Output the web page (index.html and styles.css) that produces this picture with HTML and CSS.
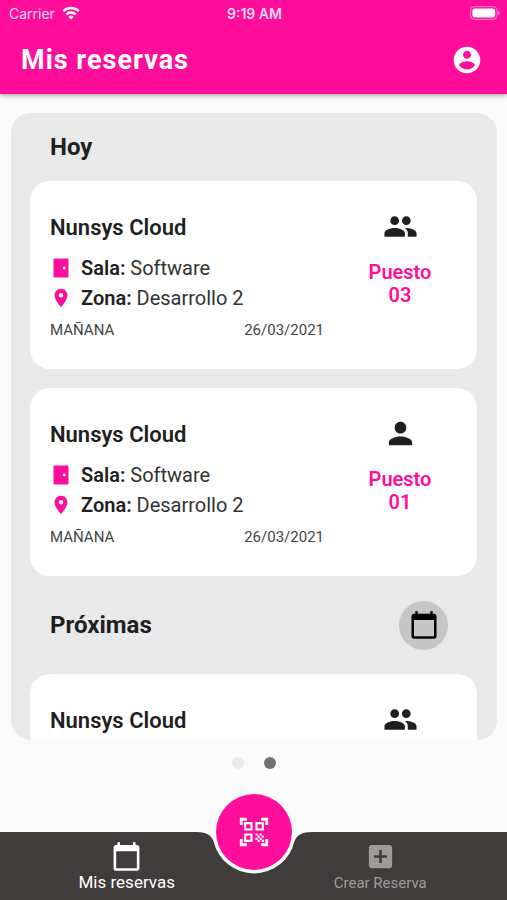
FILE: index.html
```html
<!DOCTYPE html>
<html lang="es">
<head>
<meta charset="utf-8">
<meta name="viewport" content="width=device-width, initial-scale=1">
<title>Mis reservas</title>
<link rel="stylesheet" href="styles.css">
</head>
<body>
<svg class="symbols" aria-hidden="true">
  <symbol id="people" viewBox="0 0 24 24"><path d="M16 11c1.66 0 2.99-1.34 2.99-3S17.66 5 16 5s-3 1.34-3 3 1.34 3 3 3zm-8 0c1.66 0 2.99-1.34 2.99-3S9.66 5 8 5 5 6.34 5 8s1.34 3 3 3zm0 2c-2.33 0-7 1.17-7 3.500V19h14v-2.500C15 14.170 10.330 13 8 13zm8 0c-.29 0-.62.02-.97.05 1.160.84 1.970 1.970 1.970 3.450V19h6v-2.500c0-2.330-4.670-3.500-7-3.500z"/></symbol>
  <symbol id="person" viewBox="0 0 24 24"><path d="M12 12c2.210 0 4-1.790 4-4s-1.790-4-4-4-4 1.790-4 4 1.790 4 4 4zm0 2c-2.670 0-8 1.340-8 4v2h16v-2c0-2.660-5.330-4-8-4z"/></symbol>
  <symbol id="door" viewBox="0 0 22 22"><path fill-rule="evenodd" d="M4.500 1.500h13a1 1 0 0 1 1 1v17a1 1 0 0 1-1 1h-13a1 1 0 0 1-1-1v-17a1 1 0 0 1 1-1zM14.200 9.600a1.400 1.400 0 1 0 0 2.800 1.400 1.400 0 0 0 0-2.800z"/></symbol>
  <symbol id="place" viewBox="0 0 24 24"><path d="M12 2C8.130 2 5 5.130 5 9c0 5.250 7 13 7 13s7-7.750 7-13c0-3.870-3.130-7-7-7zm0 9.500a2.500 2.500 0 0 1 0-5 2.500 2.500 0 0 1 0 5z"/></symbol>
  <symbol id="calendar" viewBox="0 0 24 24"><path d="M20 3h-1V1h-2v2H7V1H5v2H4c-1.100 0-2 .9-2 2v16c0 1.100.9 2 2 2h16c1.100 0 2-.9 2-2V5c0-1.100-.9-2-2-2zm0 18H4V8h16v13z"/></symbol>
</svg>

<header class="header">
  <div class="status">
    <div class="status-left">
      <span>Carrier</span>
      <svg class="wifi" viewBox="0 0 18 14" aria-hidden="true">
        <path d="M9 13.600 6.400 10.900a3.700 3.700 0 0 1 5.200 0z" fill="currentColor"/>
        <path d="M4.300 8.500a6.700 6.700 0 0 1 9.400 0M1.200 5.200a11.200 11.200 0 0 1 15.600 0" fill="none" stroke="currentColor" stroke-width="2.400"/>
      </svg>
    </div>
    <span class="status-time">9:19 AM</span>
    <div class="status-right">
      <svg class="battery" viewBox="0 0 30 14" aria-hidden="true">
        <rect x="0.600" y="0.600" width="26.400" height="12.800" rx="4" fill="none" stroke="#fff" stroke-opacity=".4" stroke-width="1.200"/>
        <rect x="2.400" y="2.400" width="22.800" height="9.200" rx="2.400" fill="#fff"/>
        <path d="M28 4.800q1.800.6 1.800 2.200t-1.800 2.200z" fill="#fff" fill-opacity=".45"/>
      </svg>
    </div>
  </div>
  <div class="app-bar">
    <h1 class="app-title">Mis reservas</h1>
    <button class="icon-button" type="button" aria-label="Perfil">
      <svg class="profile-icon" viewBox="0 0 24 24"><path d="M12 2C6.480 2 2 6.480 2 12s4.480 10 10 10 10-4.480 10-10S17.520 2 12 2zm0 3c1.660 0 3 1.340 3 3s-1.340 3-3 3-3-1.340-3-3 1.340-3 3-3zm0 14.200c-2.500 0-4.710-1.280-6-3.220.03-1.990 4-3.080 6-3.080 1.990 0 5.970 1.090 6 3.080-1.290 1.940-3.500 3.220-6 3.220z"/></svg>
    </button>
  </div>
</header>

<main class="content">
  <div class="panel">
    <div class="section-head">
      <h2 class="section-title">Hoy</h2>
    </div>
    <div class="cards">
      <article class="card">
        <div class="card-info">
          <h3 class="card-title">Nunsys Cloud</h3>
          <p class="detail"><svg class="detail-icon"><use href="#door"/></svg><span><b>Sala:</b> Software</span></p>
          <p class="detail"><svg class="detail-icon"><use href="#place"/></svg><span><b>Zona:</b> Desarrollo 2</span></p>
          <div class="schedule"><span>MAÑANA</span><time datetime="2021-03-26">26/03/2021</time></div>
        </div>
        <div class="seat">
          <svg class="seat-icon"><use href="#people"/></svg>
          <p class="seat-label">Puesto<br>03</p>
        </div>
      </article>
      <article class="card">
        <div class="card-info">
          <h3 class="card-title">Nunsys Cloud</h3>
          <p class="detail"><svg class="detail-icon"><use href="#door"/></svg><span><b>Sala:</b> Software</span></p>
          <p class="detail"><svg class="detail-icon"><use href="#place"/></svg><span><b>Zona:</b> Desarrollo 2</span></p>
          <div class="schedule"><span>MAÑANA</span><time datetime="2021-03-26">26/03/2021</time></div>
        </div>
        <div class="seat">
          <svg class="seat-icon"><use href="#person"/></svg>
          <p class="seat-label">Puesto<br>01</p>
        </div>
      </article>
    </div>
    <div class="section-head section-head-tall">
      <h2 class="section-title">Próximas</h2>
      <button class="calendar-button" type="button" aria-label="Calendario"><svg class="calendar-icon"><use href="#calendar"/></svg></button>
    </div>
    <div class="cards">
      <article class="card">
        <div class="card-info">
          <h3 class="card-title">Nunsys Cloud</h3>
        </div>
        <div class="seat">
          <svg class="seat-icon"><use href="#people"/></svg>
        </div>
      </article>
    </div>
  </div>
  <div class="dots">
    <span class="dot"></span>
    <span class="dot dot-active"></span>
  </div>
</main>

<nav class="nav">
  <a class="nav-item nav-item-active" href="#reservas">
    <svg class="nav-icon"><use href="#calendar"/></svg>
    <span>Mis reservas</span>
  </a>
  <a class="nav-item" href="#crear">
    <svg class="nav-icon" viewBox="0 0 24 24"><path d="M19 3H5c-1.110 0-2 .9-2 2v14c0 1.100.89 2 2 2h14c1.100 0 2-.9 2-2V5c0-1.100-.9-2-2-2zm-2 10h-4v4h-2v-4H7v-2h4V7h2v4h4v2z"/></svg>
    <span>Crear Reserva</span>
  </a>
  <svg class="notch" viewBox="0 0 120 44" aria-hidden="true"><path d="M0 0H120V1H118C108 1 103 4 100.500 10A41.500 41.500 0 0 1 19.500 10C17 4 12 1 2 1H0Z"/></svg>
  <button class="scan-button" type="button" aria-label="Escanear código QR">
    <svg class="scan-icon" viewBox="0 0 24 24"><path d="M9.500 6.500v3h-3v-3h3M11 5H5v6h6V5zM9.500 14.500v3h-3v-3h3M11 13H5v6h6v-6zM17.500 6.500v3h-3v-3h3M19 5h-6v6h6V5zM13 13h1.500v1.500H13zM14.500 14.500H16V16h-1.500zM16 13h1.500v1.500H16zM13 16h1.500v1.500H13zM14.500 17.500H16V19h-1.500zM16 16h1.500v1.500H16zM17.500 14.500H19V16h-1.500zM17.500 17.500H19V19h-1.500zM22 7h-2V4h-3V2h5v5zM22 22v-5h-2v3h-3v2h5zM2 22h5v-2H4v-3H2v5zM2 2v5h2V4h3V2H2z"/></svg>
  </button>
</nav>
</body>
</html>
```
FILE: styles.css
```css
:root {
  --pink: #ff0d9b;
  --page: #fafafa;
  --panel: #e9e9e9;
  --ink: #1f1f1f;
  --nav: #403c3b;
}

* {
  box-sizing: border-box;
}

body {
  margin: 0;
  height: 100vh;
  display: flex;
  flex-direction: column;
  background: var(--page);
  color: var(--ink);
  font-family: Roboto, sans-serif;
}

h1, h2, h3, p {
  margin: 0;
}

button {
  padding: 0;
  border: 0;
  background: none;
  color: inherit;
  cursor: pointer;
}

svg {
  display: block;
  flex: none;
  fill: currentColor;
}

.symbols {
  display: none;
}

/* Header */
.header {
  position: relative;
  background: var(--pink);
  color: #fff;
  box-shadow: 0 1px 5px rgba(0, 0, 0, 0.4);
}

.status {
  display: grid;
  grid-template-columns: 1fr auto 1fr;
  align-items: center;
  height: 26px;
  padding: 0 7px 0 9px;
  color: #ffd9f0;
  font-family: Inter, sans-serif;
  font-size: 14px;
}

.status-left {
  display: flex;
  align-items: center;
  gap: 7px;
}

.wifi {
  width: 18px;
  height: 14px;
  color: #fff;
}

.status-time {
  font-weight: 600;
}

.status-right {
  display: flex;
  justify-content: flex-end;
}

.battery {
  width: 30px;
  height: 14px;
}

.app-bar {
  display: flex;
  align-items: center;
  justify-content: space-between;
  height: 68px;
  padding: 0 24px 0 21px;
}

.app-title {
  font-size: 27px;
  line-height: 32px;
  font-weight: 700;
  letter-spacing: 1px;
}

.profile-icon {
  width: 32px;
  height: 32px;
}

/* Reservation list */
.content {
  flex: 1;
  min-height: 0;
  display: flex;
  flex-direction: column;
  padding: 19px 10px 0 11px;
}

.panel {
  flex: 1;
  min-height: 0;
  padding: 0 20px 0 19px;
  border-radius: 20px;
  background: var(--panel);
  overflow-y: auto;
  scrollbar-width: none;
}

.section-head {
  display: flex;
  align-items: center;
  justify-content: space-between;
  height: 68px;
  padding: 0 29px 0 20px;
}

.section-head-tall {
  height: 98px;
}

.section-title {
  font-size: 24px;
  line-height: 28px;
  font-weight: 700;
}

.calendar-button {
  display: grid;
  place-items: center;
  width: 49px;
  height: 49px;
  border-radius: 50%;
  background: #c6c6c6;
  color: #000;
}

.calendar-icon {
  width: 30px;
  height: 30px;
}

.cards {
  display: grid;
  gap: 19px;
}

.card {
  display: grid;
  grid-template-columns: 1fr 114px;
  gap: 19px;
  padding: 28px 20px 30px;
  border-radius: 20px;
  background: #fff;
}

.card-info {
  padding-top: 6px;
}

.card-title {
  margin-bottom: 12px;
  font-size: 22px;
  line-height: 26px;
  font-weight: 600;
}

.detail {
  display: flex;
  align-items: center;
  gap: 9px;
  font-size: 20px;
  line-height: 30px;
  color: #333;
}

.detail b {
  font-weight: 600;
  color: var(--ink);
}

.detail-icon {
  width: 22px;
  height: 22px;
  color: var(--pink);
}

.schedule {
  display: flex;
  justify-content: space-between;
  margin-top: 8px;
  font-size: 15px;
  line-height: 18px;
  color: #444;
}

.seat {
  display: flex;
  flex-direction: column;
  align-items: center;
  gap: 17px;
}

.seat-icon {
  width: 35px;
  height: 35px;
}

.seat-label {
  font-size: 20px;
  line-height: 23px;
  font-weight: 600;
  text-align: center;
  color: var(--pink);
}

.dots {
  display: flex;
  justify-content: center;
  gap: 20px;
  height: 92px;
  padding-top: 17px;
}

.dot {
  width: 12px;
  height: 12px;
  border-radius: 50%;
  background: #e9e9e9;
}

.dot-active {
  background: #707070;
}

/* Bottom navigation */
.nav {
  position: relative;
  display: flex;
  height: 68px;
  background: var(--nav);
}

.nav-item {
  flex: 1;
  display: flex;
  flex-direction: column;
  align-items: center;
  gap: 1px;
  padding-top: 9px;
  color: #9d9c9b;
  font-size: 15px;
  line-height: 20px;
  text-decoration: none;
}

.nav-item-active {
  color: #fff;
  font-size: 17px;
  line-height: 18px;
}

.nav-icon {
  width: 31px;
  height: 31px;
}

.notch {
  position: absolute;
  top: -1px;
  left: 50%;
  width: 120px;
  height: 44px;
  transform: translateX(-50%);
  color: var(--page);
}

.scan-button {
  position: absolute;
  top: -38px;
  left: 50%;
  display: grid;
  place-items: center;
  width: 76px;
  height: 76px;
  border-radius: 50%;
  background: var(--pink);
  color: #fff;
  transform: translateX(-50%);
}

.scan-icon {
  width: 34px;
  height: 34px;
}
```
